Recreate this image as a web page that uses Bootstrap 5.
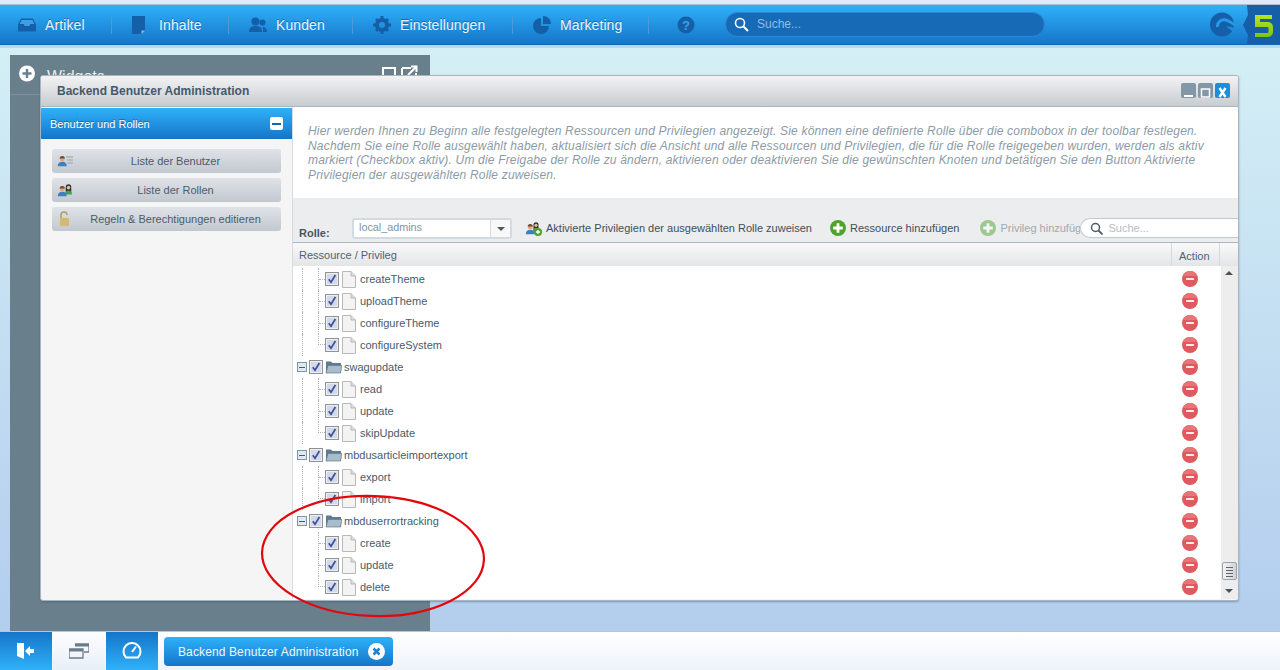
<!DOCTYPE html>
<html lang="de">
<head>
<meta charset="UTF-8">
<meta name="viewport" content="width=device-width, initial-scale=1">
<title>Backend Benutzer Administration</title>
<link href="https://cdn.jsdelivr.net/npm/bootstrap@5.3.0/dist/css/bootstrap.min.css" rel="stylesheet">
<style>
html, body { height: 670px; overflow: hidden; }
body { font-family: "Liberation Sans", Arial, sans-serif; font-size: 11px; color: #475b6b; background: #fff; }
.top-strip { height: 5px; background: #dfe9f9; border-bottom: 1px solid #aebfd4; }
.main-bar { height: 40px; background: linear-gradient(#2fb1f9, #1575c9); border-bottom: 1px solid #1268b4; box-shadow: 0 3px 0 #bcd8e4; position: relative; z-index: 2; }
.main-item { height: 18px; padding-left: 20px; color: #eaf5fd; font-size: 14px; letter-spacing: .1px; line-height: 18px; border-right: 1px solid #4d9bdb; text-shadow: 0 -1px 0 #1567ae; flex: none; }
.main-item:nth-child(1) { width: 112px; padding-left: 18px; }
.main-item:nth-child(2) { width: 117px; }
.main-item:nth-child(3) { width: 124px; }
.main-item:nth-child(4) { width: 160px; }
.main-item:nth-child(5) { width: 136px; }
.main-item:nth-child(6) { border-right: 0; padding: 0; margin-left: 28px; }
.main-icon { width: 18px; height: 18px; margin-right: 9px; flex: none; }
.main-search { width: 320px; height: 25px; margin: -1px 0 0 30px; border-radius: 13px; background: #176ab5; border: 1px solid #2a8ad8; color: #8fbde2; font-size: 12px; padding-left: 8px; flex: none; }
.logo-s { margin-left: 165px; flex: none; }
.logo-five { width: 37px; height: 39px; }
.desk { height: 586px; background: linear-gradient(#d4eff5, #b3cdee); position: relative; overflow: hidden; }
.widget-panel { position: absolute; left: 10px; top: 10px; width: 420px; height: 576px; background: #6a7f8c; color: #e9eef1; }
.widget-head { height: 40px; padding: 10px 11px 10px 9px; border-bottom: 1px solid #7f919c; font-size: 16px; }
.win { position: absolute; left: 40px; top: 30px; width: 1199px; height: 526px; background: #f5f5f5; border: 1px solid #a6b5c0; border-radius: 3px; box-shadow: 0 1px 2px rgba(60,80,100,.45); overflow: hidden; }
.win-title { height: 31px; background: linear-gradient(#f3f3f4, #c8ccd0); border-bottom: 1px solid #a9b6c0; padding: 0 8px 0 16px; font-size: 12px; font-weight: bold; color: #46596a; }
.win-btns { margin-top: -2px; }
.win-btn { width: 15px; height: 15px; border-radius: 2px; background: #8497a6; margin-left: 2px; }
.win-btn.is-close { background: #1b8fdc; }
.side { width: 251px; flex: none; }
.side-head { height: 31px; margin-top: 1px; background: linear-gradient(#2fb1f9, #1575c9); color: #fff; padding: 0 9px 0 9px; text-shadow: 0 -1px 0 #1567ae; }
.side-head span { padding-top: 1px; }
.side-toggle { width: 13px; height: 13px; background: #fff; border-radius: 2px; }
.side-toggle i { display: block; width: 9px; height: 2px; background: #1668b0; }
.side-list { padding: 10px 10px 0 11px; }
.side-btn { height: 24px; width: 229px; margin-bottom: 5px; border-radius: 3px; background: linear-gradient(#dfe3e8, #c2c8cf); color: #4a5b6b; padding-left: 18px; position: relative; }
.side-btn svg { position: absolute; left: 5px; top: 4px; }
.content { width: 947px; flex: none; background: #fff; border-left: 1px solid #d3dce2; overflow: hidden; }
.intro { height: 91px; padding: 17px 15px 0 15px; font-size: 12px; font-style: italic; letter-spacing: .18px; line-height: 14.7px; color: #8c9ba6; white-space: nowrap; }
.tools { height: 45px; background: #ecedef; border-bottom: 1px solid #a6b8c6; padding: 20px 0 0 6px; white-space: nowrap; color: #3e4d5a; }
.role-label { width: 53px; flex: none; font-weight: bold; font-size: 11px; padding-top: 7px; color: #455664; }
.combo { width: 160px; height: 21px; flex: none; background: #fff; border: 2px solid #d3dbe2; border-radius: 3px; color: #7f93a5; padding-left: 5px; margin-right: 13px; font-size: 10.8px; line-height: 15px; }
.combo-arrow { width: 20px; height: 17px; border-left: 1px solid #d3dbe2; background: #f8f8f8; }
.combo-arrow i { display: block; border: 4px solid transparent; border-top-color: #4c5963; border-bottom: 0; }
.tool-item { height: 20px; margin-right: 18px; flex: none; }
.tool-item + .tool-item { margin-right: 21px; }
.tool-item svg { margin-right: 4px; flex: none; }
.tool-item.is-off { color: #a3a8ac; width: 100px; margin-right: 0; overflow: hidden; }
.tool-search { width: 170px; height: 20px; border: 1px solid #bdcad4; border-right: 0; border-radius: 10px 0 0 10px; background: #fff; color: #b4bdc5; padding-left: 9px; flex: none; }
.tool-search svg { margin-right: 5px; }
.grid-head { height: 23px; background: linear-gradient(#f9f9f9, #e4e5e7); color: #4e6273; padding-left: 6px; margin-right: 1px; }
.grid-head span { padding-top: 2px; }
.grid-action { width: 49px; height: 23px; margin-left: auto; margin-right: 18px; border-left: 1px solid #d6dadd; border-right: 1px solid #d6dadd; padding: 2px 0 0 7px; line-height: 23px; }
.tree-wrap { height: 333px; }
.tree-body { flex: 1; padding-top: 2px; min-width: 0; }
.tree-row { height: 22px; padding-left: 4px; color: #475b6b; position: relative; }
.tree-row .t-name { margin-left: 4px; }
.tree-row .t-name.is-folder { margin-left: 2px; }
.t-guide { width: 16px; height: 22px; flex: none; border-left: 1px dotted #aeb6bc; }
.t-guide.is-end { height: 11px; align-self: flex-start; border-bottom: 1px dotted #aeb6bc; width: 7px; }
.t-guide.is-mid { width: 7px; position: relative; }
.t-guide.is-mid::after { content: ""; position: absolute; left: 0; right: 0; top: 11px; border-top: 1px dotted #aeb6bc; }
.t-pad { width: 16px; flex: none; }
.t-lead { margin-left: 5px; }
.t-toggle { width: 10px; height: 10px; border: 1px solid #7b98a8; background: #dfeaf0; margin-right: 2px; flex: none; }
.t-toggle i { display: block; width: 6px; height: 1px; background: #35607a; }
.t-check { flex: none; margin-right: 3px; }
.t-folder { flex: none; margin-left: -1px; }
.t-action { position: absolute; left: 889px; top: 3px; }
.scroll-col { width: 17px; flex: none; background: #ededed; margin-right: 1px; position: relative; }
.scroll-up, .scroll-down { position: absolute; left: 4px; border: 4px solid transparent; }
.scroll-up { top: 5px; border-bottom-color: #4a5157; border-top: 0; }
.scroll-down { bottom: 6px; border-top-color: #4a5157; border-bottom: 0; }
.scroll-thumb { position: absolute; left: 1px; top: 296px; width: 15px; height: 18px; border: 1px solid #9aa3a9; border-radius: 2px; background: linear-gradient(90deg, #f4f4f4, #cfd3d6); }
.scroll-thumb i { display: block; height: 1px; margin: 2px 3px; background: #5d666d; }
.circle-mark { position: absolute; left: 0; top: 0; pointer-events: none; z-index: 5; }
.task-bar { height: 39px; background: linear-gradient(#fff, #eef3fb); border-top: 1px solid #b7c6d6; }
.task-btn { width: 52px; height: 38px; margin-right: 1px; background: linear-gradient(#1575c9, #2fb1f9); }
.task-btn.is-light { background: linear-gradient(#fdfdfe, #e9eff8); }
.task-tab { width: 229px; height: 29px; margin: 5px 0 0 5px; border-radius: 4px; background: linear-gradient(#2fb1f9, #1575c9); color: #eef8ff; font-size: 12px; letter-spacing: .12px; padding: 0 8px 0 14px; }
</style>
</head>
<body>
<svg width="0" height="0" class="d-none">
  <defs>
    <symbol id="i-check" viewBox="0 0 14 14"><rect x=".5" y=".5" width="13" height="13" fill="#eceef1" stroke="#8f9396"/><rect x="2" y="2" width="10" height="10" fill="#d3d9e6"/><path d="M3.800 7.200l2.200 3 4.400-7.200" fill="none" stroke="#3a4f9e" stroke-width="1.700"/></symbol>
    <symbol id="i-doc" viewBox="0 0 14 17"><path d="M.5.5h8.500l4.500 4.500v11.500H.5z" fill="#f3f3f3" stroke="#b6b9bb"/><path d="M9 .5V5h4.500" fill="#dcdcdc" stroke="#b6b9bb"/></symbol>
    <symbol id="i-folder" viewBox="0 0 17 14"><path d="M1 3V1.500h5L7.500 3H16v10H1z" fill="#5f7b90"/><path d="M1 13l2-7.500h14L15.500 13z" fill="#a9bccb" stroke="#5f7b90" stroke-width=".7"/></symbol>
    <symbol id="i-remove" viewBox="0 0 16 16"><circle cx="8" cy="8" r="8" fill="#e0595e"/><path d="M.6 5a8 8 0 0 1 14.800 0z" fill="#ea7377"/><rect x="4" y="6.900" width="8" height="2.200" rx=".5" fill="#fbecec"/></symbol>
    <symbol id="i-add" viewBox="0 0 16 16"><circle cx="8" cy="8" r="8" fill="#4fa32d"/><path d="M6.600 3.200h2.800v3.400h3.400v2.800H9.400v3.400H6.600V9.400H3.200V6.600h3.400z" fill="#fff"/></symbol>
    <symbol id="i-person" viewBox="0 0 16 16"><circle cx="7" cy="5" r="3.400" fill="#e0a982"/><path d="M3.600 4.600A3.400 3.400 0 0 1 10.400 4.600z" fill="#6b4a38"/><path d="M1 15c0-4 2-6 6-6s6 2 6 6z" fill="#3f7fc0"/></symbol>
    <symbol id="i-lady" viewBox="0 0 16 16"><path d="M4 14V5a4 4 0 0 1 8 0v9z" fill="#33302e"/><circle cx="8" cy="6" r="2.600" fill="#e6bb9c"/><path d="M3 16c0-4 2-6 5-6s5 2 5 6z" fill="#38a45a"/></symbol>
  </defs>
</svg>

<div class="top-strip"></div>
<nav class="main-bar d-flex align-items-center">
  <div class="main-item d-flex align-items-center">
    <svg class="main-icon" viewBox="0 0 18 18"><path d="M3 2.500h12l3 6v7H0v-7z" fill="#155fa8"/><path d="M3.500 4h11l1.800 4h-4l-1 2H6.700l-1-2h-4z" fill="#3aa1e8"/></svg>Artikel
  </div>
  <div class="main-item d-flex align-items-center">
    <svg class="main-icon" viewBox="0 0 18 18"><path d="M0 0h13v14l-4 4H0z" fill="#155fa8"/><path d="M9.500 18v-3.500H13z" fill="#7fc0ee"/></svg>Inhalte
  </div>
  <div class="main-item d-flex align-items-center">
    <svg class="main-icon" viewBox="0 0 18 18"><circle cx="6.500" cy="5.500" r="4" fill="#155fa8"/><path d="M0 16c0-4 2-6 6.500-6s6.500 2 6.500 6z" fill="#155fa8"/><circle cx="13.500" cy="6.500" r="3" fill="#155fa8"/><path d="M14 16h4c0-3-1.500-5-4.500-5 .7 1.500.7 3 .5 5z" fill="#155fa8"/></svg>Kunden
  </div>
  <div class="main-item d-flex align-items-center">
    <svg class="main-icon" viewBox="0 0 18 18"><circle cx="9" cy="9" r="5" fill="none" stroke="#155fa8" stroke-width="4"/><path d="M7.500 0h3v3h-3zM7.500 15h3v3h-3zM0 7.500h3v3H0zM15 7.500h3v3h-3zM2 4l2-2 2 2-2 2zM12 14l2-2 2 2-2 2zM12 4l2-2 2 2-2 2zM2 14l2-2 2 2-2 2z" fill="#155fa8"/></svg>Einstellungen
  </div>
  <div class="main-item d-flex align-items-center">
    <svg class="main-icon" viewBox="0 0 18 18"><path d="M8 2a8 8 0 1 0 8 8H8z" fill="#155fa8"/><path d="M10 0a8 8 0 0 1 8 8h-8z" fill="#155fa8"/></svg>Marketing
  </div>
  <div class="main-item d-flex align-items-center">
    <svg width="18" height="18" viewBox="0 0 18 18"><circle cx="9" cy="9" r="8.500" fill="#155fa8"/><text x="9" y="13.500" text-anchor="middle" font-family="Liberation Sans" font-weight="bold" font-size="13" fill="#3aa1e8">?</text></svg>
  </div>
  <div class="main-search d-flex align-items-center">
    <svg class="me-2" width="15" height="15" viewBox="0 0 15 15"><circle cx="6" cy="6" r="4.500" fill="none" stroke="#fff" stroke-width="1.600"/><path d="M9.500 9.500l4.500 4.500" stroke="#fff" stroke-width="2"/></svg>Suche...
  </div>
  <svg class="logo-s" width="25" height="25" viewBox="0 0 25 25"><circle cx="12" cy="12.500" r="12" fill="#155fa8"/><path d="M8 15.500C6.500 10 11 6.500 15.500 7.500c3.500.8 6.500 3 9.500 5.500V5h-4l-5-2z" fill="#2495e6" opacity="0"/><path d="M7.500 15C7 10.500 11 7 15.500 8c3.500.8 6.500 3 9.500 5" fill="none" stroke="#2699ea" stroke-width="3"/><path d="M16 13.500c3 1.500 6 2 9 1.500v5c-3-1-7-3-9-6.500z" fill="#2288dc"/></svg>
  <div class="logo-five ms-auto">
    <svg width="37" height="39" viewBox="0 0 37 39"><defs><linearGradient id="g-lime" x1="0" y1="0" x2="0" y2="1"><stop offset="0" stop-color="#b6e51e"/><stop offset="1" stop-color="#7fc40e"/></linearGradient></defs><path d="M4 0h33v39H4l1-9L0 20l5-10z" fill="#155fa8"/><path d="M12 10h17v4H17v3h8a5 5 0 0 1 5 5v5a5 5 0 0 1-5 5H12v-4h12c1 0 1.500-.5 1.500-1.500v-3c0-1-.5-1.500-1.500-1.500H12z" fill="url(#g-lime)"/></svg>
  </div>
</nav>

<div class="desk">
  <div class="widget-panel">
    <div class="widget-head d-flex">
      <svg class="me-2" width="16" height="17" viewBox="0 0 16 16"><circle cx="8" cy="8" r="8" fill="#fff"/><path d="M6.800 3.500h2.400v3.300h3.300v2.400H9.200v3.300H6.800V9.200H3.500V6.800h3.300z" fill="#6a7f8c"/></svg>
      <span class="ms-1">Widgets</span>
      <svg class="ms-auto" width="37" height="17" viewBox="0 0 37 17"><rect x="1" y="3" width="12" height="10" fill="none" stroke="#fff" stroke-width="2"/><path d="M20 3h9M20 3v11h14V8M26 10l8-8M29 1.500h5.500V7" fill="none" stroke="#fff" stroke-width="2"/></svg>
    </div>
  </div>

  <div class="win">
    <div class="win-title d-flex align-items-center">
      <span>Backend Benutzer Administration</span>
      <div class="win-btns ms-auto d-flex">
        <div class="win-btn"><svg width="15" height="15" viewBox="0 0 15 15"><rect x="3" y="10" width="9" height="2" fill="#fff"/></svg></div>
        <div class="win-btn"><svg width="15" height="15" viewBox="0 0 15 15"><rect x="3.500" y="4" width="8" height="8" fill="none" stroke="#fff" stroke-width="1.500"/></svg></div>
        <div class="win-btn is-close"><svg width="15" height="15" viewBox="0 0 15 15"><path d="M4.500 3l6 9M10.500 3l-6 9" stroke="#fff" stroke-width="2.400"/></svg></div>
      </div>
    </div>
    <div class="d-flex">
      <aside class="side">
        <div class="side-head d-flex align-items-center justify-content-between">
          <span>Benutzer und Rollen</span>
          <div class="side-toggle d-flex align-items-center justify-content-center"><i></i></div>
        </div>
        <div class="side-list">
          <div class="side-btn d-flex align-items-center justify-content-center">
            <svg width="16" height="16" viewBox="0 0 16 16"><use href="#i-person" width="12" height="12" y="2"/><path d="M9 4h7M10 7h6M10 10h6" stroke="#a9b4bd" stroke-width="1.300"/></svg>Liste der Benutzer
          </div>
          <div class="side-btn d-flex align-items-center justify-content-center">
            <svg width="17" height="16" viewBox="0 0 17 16"><use href="#i-lady" x="6" y="0" width="11" height="14"/><use href="#i-person" x="0" y="3" width="12" height="12"/></svg>Liste der Rollen
          </div>
          <div class="side-btn d-flex align-items-center justify-content-center">
            <svg width="16" height="16" viewBox="0 0 16 16"><path d="M4 7V4a3 3 0 0 1 6 0" fill="none" stroke="#b39a6a" stroke-width="1.500"/><rect x="3" y="7" width="9" height="8" rx="1" fill="#d5b878"/></svg>Regeln &amp; Berechtigungen editieren
          </div>
        </div>
      </aside>

      <section class="content">
        <div class="intro">Hier werden Ihnen zu Beginn alle festgelegten Ressourcen und Privilegien angezeigt. Sie können eine definierte Rolle über die combobox in der toolbar festlegen.<br>Nachdem Sie eine Rolle ausgewählt haben, aktualisiert sich die Ansicht und alle Ressourcen und Privilegien, die für die Rolle freigegeben wurden, werden als aktiv<br>markiert (Checkbox aktiv). Um die Freigabe der Rolle zu ändern, aktivieren oder deaktivieren Sie die gewünschten Knoten und betätigen Sie den Button Aktivierte<br>Privilegien der ausgewählten Rolle zuweisen.</div>
        <div class="tools d-flex">
          <div class="role-label">Rolle:</div>
          <div class="combo d-flex justify-content-between align-items-start">
            <span>local_admins</span>
            <div class="combo-arrow d-flex align-items-center justify-content-center"><i></i></div>
          </div>
          <div class="tool-item d-flex align-items-center">
            <svg width="17" height="16" viewBox="0 0 17 16"><use href="#i-lady" x="6" y="0" width="10" height="13"/><use href="#i-person" x="0" y="3" width="12" height="12"/><circle cx="13" cy="12" r="4" fill="#4fa32d"/><path d="M13 10v4M11 12h4" stroke="#fff" stroke-width="1.300"/></svg>
            <span>Aktivierte Privilegien der ausgewählten Rolle zuweisen</span>
          </div>
          <div class="tool-item d-flex align-items-center">
            <svg width="16" height="16"><use href="#i-add"/></svg>
            <span>Ressource hinzufügen</span>
          </div>
          <div class="tool-item is-off d-flex align-items-center">
            <svg width="16" height="16" opacity=".5"><use href="#i-add"/></svg>
            <span>Privileg hinzufügen</span>
          </div>
          <div class="tool-search d-flex align-items-center">
            <svg width="13" height="13" viewBox="0 0 13 13"><circle cx="5.500" cy="5.500" r="4" fill="none" stroke="#4b5c6a" stroke-width="1.500"/><path d="M8.500 8.500l4 4" stroke="#4b5c6a" stroke-width="1.800"/></svg>Suche...
          </div>
        </div>
        <div class="grid-head d-flex align-items-center">
          <span>Ressource / Privileg</span>
          <div class="grid-action">Action</div>
        </div>
        <div class="d-flex tree-wrap">
          <div class="tree-body" id="tree"></div>
          <div class="scroll-col">
            <span class="scroll-up"></span>
            <div class="scroll-thumb"><i class="mt-1"></i><i></i><i></i><i></i></div>
            <span class="scroll-down"></span>
          </div>
        </div>
      </section>
    </div>
  </div>

  <svg class="circle-mark" width="1280" height="586" viewBox="0 0 1280 586"><ellipse cx="373" cy="511" rx="111" ry="60" transform="rotate(2 373 511)" fill="none" stroke="#e3060c" stroke-width="2.200"/></svg>
</div>

<footer class="task-bar d-flex">
  <div class="task-btn d-flex align-items-center justify-content-center">
    <svg width="18" height="16" viewBox="0 0 18 16"><path d="M0 0h7v16l-7-3z" fill="#fff"/><path d="M8 8l5-5v3h4v4h-4v3z" fill="#fff"/></svg>
  </div>
  <div class="task-btn is-light d-flex align-items-center justify-content-center">
    <svg width="20" height="16" viewBox="0 0 20 16"><path d="M6 1h14v8h-5M0 6h14v9H0z" fill="none" stroke="#6b7c88" stroke-width="1.300"/><path d="M6 1h14v2.500H6zM0 6h14v2.500H0z" fill="#6b7c88"/></svg>
  </div>
  <div class="task-btn d-flex align-items-center justify-content-center">
    <svg width="20" height="18" viewBox="0 0 20 18"><path d="M4 15.500a8.500 8.500 0 1 1 12 0z" fill="none" stroke="#fff" stroke-width="2"/><path d="M10 10l4-5.500" stroke="#fff" stroke-width="2"/></svg>
  </div>
  <div class="task-tab d-flex align-items-center justify-content-between">
    <span>Backend Benutzer Administration</span>
    <svg width="17" height="17" viewBox="0 0 17 17"><circle cx="8.500" cy="8.500" r="8.500" fill="#fff"/><path d="M5.500 5.500l6 6M11.500 5.500l-6 6" stroke="#1a83d4" stroke-width="2.600"/></svg>
  </div>
</footer>

<script>
// tree rows of the grid: kind l = leaf, e = last leaf, f = folder
const rows = [
  ['l', 'createTheme'], ['l', 'uploadTheme'], ['l', 'configureTheme'], ['e', 'configureSystem'],
  ['f', 'swagupdate'], ['l', 'read'], ['l', 'update'], ['e', 'skipUpdate'],
  ['f', 'mbdusarticleimportexport'], ['l', 'export'], ['e', 'import'],
  ['f', 'mbduserrortracking'], ['l', 'create'], ['l', 'update'], ['e', 'delete']
];
const check = '<svg class="t-check" width="14" height="14"><use href="#i-check"/></svg>';
const tree = document.getElementById('tree');
let html = '';
rows.forEach(function (r, i) {
  const lastGroup = i > 11;
  let cells = '';
  if (r[0] === 'f') {
    cells = '<div class="t-toggle d-flex align-items-center justify-content-center"><i></i></div>' + check +
      '<svg class="t-folder" width="17" height="14"><use href="#i-folder"/></svg><span class="t-name is-folder">' + r[1] + '</span>';
  } else {
    cells = (lastGroup ? '<div class="t-pad t-lead"></div>' : '<div class="t-guide t-lead"></div>') +
      '<div class="t-guide ' + (r[0] === 'e' ? 'is-end' : 'is-mid') + '"></div>' + check +
      '<svg width="14" height="17"><use href="#i-doc"/></svg><span class="t-name">' + r[1] + '</span>';
  }
  html += '<div class="tree-row d-flex align-items-center">' + cells +
    '<svg class="t-action" width="16" height="16"><use href="#i-remove"/></svg></div>';
});
tree.innerHTML = html;
</script>
<script src="https://cdn.jsdelivr.net/npm/bootstrap@5.3.0/dist/js/bootstrap.bundle.min.js"></script>
</body>
</html>
